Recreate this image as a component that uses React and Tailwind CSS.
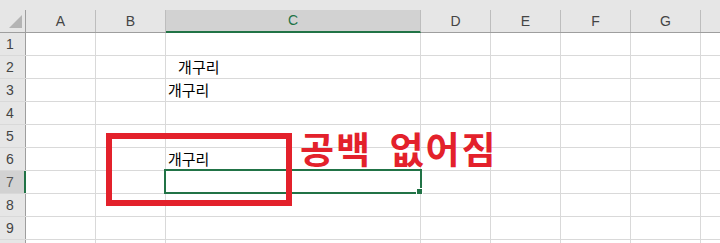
const columns = [
  { id: "A", w: "w-[70px]" },
  { id: "B", w: "w-[70px]" },
  { id: "C", w: "w-[255px]", selected: true },
  { id: "D", w: "w-[70px]" },
  { id: "E", w: "w-[70px]" },
  { id: "F", w: "w-[70px]" },
  { id: "G", w: "w-[70px]" },
  { id: "H", w: "w-[70px]", hidden: true },
];

const cells = {
  "2-C": "   개구리",
  "3-C": "개구리",
  "6-C": "개구리",
};

const rows = [1, 2, 3, 4, 5, 6, 7, 8, 9, 10];
const activeRow = 7;

export default function App() {
  return (
    <div
      className="relative w-[720px] h-[243px] overflow-hidden bg-white"
      style={{ fontFamily: '"Liberation Sans", "Noto Sans CJK KR", sans-serif' }}
    >
      <div className="h-[10px] bg-[#e6e6e6]" />

      {/* column headers */}
      <div className="flex h-[23px] bg-[#e6e6e6] border-b border-[#9e9e9e]">
        <div className="relative w-[26px] shrink-0 border-r border-[#9e9e9e]">
          <svg width="26" height="22" className="absolute left-0 top-0">
            <polygon points="22,5 22,18 9,18" fill="#b4b4b4" />
          </svg>
        </div>
        {columns.map((c) => (
          <div
            key={c.id}
            className={`${c.w} shrink-0 flex items-center justify-center text-[14px] ${
              c.selected
                ? "bg-[#d2d2d2] text-[#217346] border-b-2 border-[#217346] -mb-[1px] border-r border-r-[#bdbdbd]"
                : "text-[#444] border-r border-[#bdbdbd]"
            }`}
          >
            {c.hidden ? "" : c.id}
          </div>
        ))}
      </div>

      {/* rows */}
      {rows.map((r) => (
        <div key={r} className="flex h-[23px] border-b border-[#d9d9d9]">
          <div
            className={`w-[26px] shrink-0 flex items-center pl-[6px] text-[14px] ${
              r === activeRow
                ? "bg-[#d2d2d2] text-[#555] border-r-2 border-[#217346]"
                : "bg-[#e6e6e6] text-[#444] border-r border-[#9e9e9e]"
            }`}
          >
            {r < 10 ? r : ""}
          </div>
          {columns.map((c) => {
            const active = r === activeRow && c.selected;
            return (
              <div
                key={c.id}
                className={`${c.w} relative shrink-0 flex items-center pl-[2px] border-r border-[#d9d9d9] whitespace-pre text-[15px] text-black`}
                style={{ fontFamily: '"Noto Sans CJK KR", sans-serif' }}
              >
                {cells[`${r}-${c.id}`] || ""}
                {active && (
                  <div className="absolute -left-[2px] -top-[2px] w-[258px] h-[25px] border-2 border-[#217346]">
                    <div className="absolute -right-[2px] -bottom-[2px] w-[5px] h-[5px] bg-[#217346] outline outline-1 outline-white" />
                  </div>
                )}
              </div>
            );
          })}
        </div>
      ))}

      {/* annotation */}
      <div className="absolute left-[106px] top-[133px] w-[186px] h-[73px] border-[6px] border-[#e3212b]" />
      <div
        className="absolute left-[300px] top-[123px] text-[37px] font-bold leading-[50px] tracking-[2px] [word-spacing:7px] text-[#e3212b] whitespace-nowrap"
        style={{ fontFamily: '"Noto Sans CJK KR", sans-serif' }}
      >
        공백 없어짐
      </div>
    </div>
  );
}
